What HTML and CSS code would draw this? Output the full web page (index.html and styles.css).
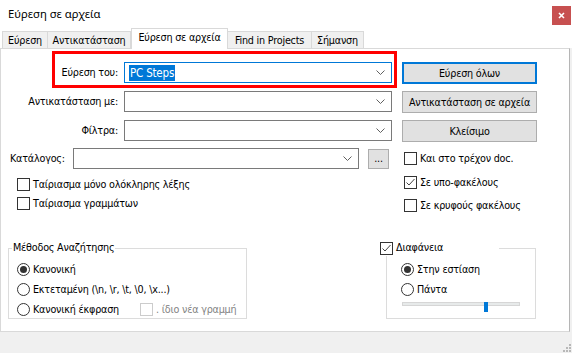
FILE: index.html
```html
<!DOCTYPE html>
<html lang="el">
<head>
    <meta charset="UTF-8">
    <meta name="viewport" content="width=device-width, initial-scale=1.0">
    <title>Εύρεση σε αρχεία</title>
    <link rel="stylesheet" href="styles.css">
</head>
<body>
    <div class="window">
        <div class="titlebar">
            <span class="title">Εύρεση σε αρχεία</span>
            <span class="close">
                <svg width="7" height="7" viewBox="0 0 7 7"><path d="M1 1 L6 6 M6 1 L1 6" stroke="#fff" stroke-width="1.6"/></svg>
            </span>
        </div>

        <div class="tabbar">
            <div class="tab tab-1">Εύρεση</div>
            <div class="tab tab-2">Αντικατάσταση</div>
            <div class="tab tab-3 active">Εύρεση σε αρχεία</div>
            <div class="tab tab-4">Find in Projects</div>
            <div class="tab tab-5">Σήμανση</div>
        </div>

        <div class="body">
            <div class="panel">
                <div class="find-rows">
                    <div class="row">
                        <label class="row-label">Εύρεση του:</label>
                        <div class="combo focused">
                            <span class="combo-text"><span class="selected-text">PC Steps</span></span>
                            <svg class="chevron" width="9" height="5" viewBox="0 0 9 5"><polyline points="0.5,0.5 4.5,4.5 8.5,0.5" fill="none" stroke="#606060"/></svg>
                        </div>
                        <button class="btn default">Εύρεση όλων</button>
                    </div>
                    <div class="row">
                        <label class="row-label">Αντικατάσταση με:</label>
                        <div class="combo">
                            <span class="combo-text"></span>
                            <svg class="chevron" width="9" height="5" viewBox="0 0 9 5"><polyline points="0.5,0.5 4.5,4.5 8.5,0.5" fill="none" stroke="#606060"/></svg>
                        </div>
                        <button class="btn">Αντικατάσταση σε αρχεία</button>
                    </div>
                    <div class="row">
                        <label class="row-label">Φίλτρα:</label>
                        <div class="combo">
                            <span class="combo-text"></span>
                            <svg class="chevron" width="9" height="5" viewBox="0 0 9 5"><polyline points="0.5,0.5 4.5,4.5 8.5,0.5" fill="none" stroke="#606060"/></svg>
                        </div>
                        <button class="btn">Κλείσιμο</button>
                    </div>
                </div>

                <div class="dir-row">
                    <label class="dir-label">Κατάλογος:</label>
                    <div class="combo dir-combo">
                        <span class="combo-text"></span>
                        <svg class="chevron" width="9" height="5" viewBox="0 0 9 5"><polyline points="0.5,0.5 4.5,4.5 8.5,0.5" fill="none" stroke="#606060"/></svg>
                    </div>
                    <button class="btn browse">...</button>
                    <div class="option dir-option"><span class="check"></span>Και στο τρέχον doc.</div>
                </div>

                <div class="options">
                    <div class="options-left">
                        <div class="option"><span class="check"></span>Ταίριασμα μόνο ολόκληρης λέξης</div>
                        <div class="option"><span class="check"></span>Ταίριασμα γραμμάτων</div>
                    </div>
                    <div class="options-right">
                        <div class="option"><span class="check checked"><svg width="11" height="11" viewBox="0 0 11 11"><polyline points="1.5,5.5 4,8 9.5,2" fill="none" stroke="#444" stroke-width="1"/></svg></span>Σε υπο-φακέλους</div>
                        <div class="option"><span class="check"></span>Σε κρυφούς φακέλους</div>
                    </div>
                </div>

                <div class="groups">
                    <div class="group group-search">
                        <span class="group-title">Μέθοδος Αναζήτησης</span>
                        <div class="radio-list">
                            <div class="option"><span class="radio on"></span>Κανονική</div>
                            <div class="option"><span class="radio"></span>Εκτεταμένη (\n, \r, \t, \0, \x...)</div>
                            <div class="option">
                                <span class="radio"></span>Κανονική έκφραση
                                <span class="disabled-option"><span class="check disabled"></span>. ίδιο νέα γραμμή</span>
                            </div>
                        </div>
                    </div>

                    <div class="group group-trans">
                        <span class="group-title trans-title"><span class="check checked"><svg width="11" height="11" viewBox="0 0 11 11"><polyline points="1.5,5.5 4,8 9.5,2" fill="none" stroke="#444" stroke-width="1"/></svg></span>Διαφάνεια</span>
                        <div class="radio-list">
                            <div class="option"><span class="radio on"></span>Στην εστίαση</div>
                            <div class="option"><span class="radio"></span>Πάντα</div>
                        </div>
                        <div class="slider">
                            <div class="track"></div>
                            <div class="thumb"></div>
                        </div>
                    </div>
                </div>

                <!-- annotation around the search field -->
                <div class="highlight-box"></div>
            </div>
            <div class="side"></div>
        </div>

        <div class="footer">
            <svg class="grip" width="9" height="9" viewBox="0 0 9 9">
                <rect x="7" y="1" width="2" height="2" fill="#b8b8b8"/>
                <rect x="4" y="4" width="2" height="2" fill="#b8b8b8"/>
                <rect x="7" y="4" width="2" height="2" fill="#b8b8b8"/>
                <rect x="1" y="7" width="2" height="2" fill="#b8b8b8"/>
                <rect x="4" y="7" width="2" height="2" fill="#b8b8b8"/>
                <rect x="7" y="7" width="2" height="2" fill="#b8b8b8"/>
            </svg>
        </div>
    </div>
</body>
</html>
```

FILE: styles.css
```css
body {
    margin: 0;
    padding: 0;
    font-family: "DejaVu Sans Condensed", "DejaVu Sans", sans-serif;
    font-size: 10.7px;
    letter-spacing: -0.2px;
    color: #000;
    background-color: #f0f0f0;
}
.window {
    width: 572px;
    height: 353px;
    overflow: hidden;
}

/* title bar */
.titlebar {
    height: 28px;
    background-color: #fff;
    display: flex;
    align-items: flex-start;
    justify-content: space-between;
}
.title {
    margin: 6px 0 0 8px;
    font-family: "Noto Sans", sans-serif;
    font-size: 11.3px;
    letter-spacing: 0;
}
.close {
    width: 19px;
    height: 19px;
    margin-top: 6px;
    margin-right: 1px;
    background-color: #c75050;
    display: flex;
    align-items: center;
    justify-content: center;
}

/* tabs */
.tabbar {
    height: 20px;
    background-color: #fff;
    display: flex;
    align-items: flex-end;
    padding-left: 2px;
}
.tab {
    height: 17px;
    box-sizing: border-box;
    background-color: #f0f0f0;
    border: 1px solid #d9d9d9;
    border-bottom: none;
    border-left: none;
    display: flex;
    align-items: center;
    justify-content: center;
    white-space: nowrap;
}
.tab-1 { width: 46px; border-left: 1px solid #d9d9d9; }
.tab-2 { width: 83px; }
.tab-3 { width: 97px; }
.tab-4 { width: 84px; }
.tab-5 { width: 52px; }
.tab.active {
    height: 21px;
    margin-bottom: -1px;
    background-color: #fff;
    border-left: 1px solid #d9d9d9;
    position: relative;
    z-index: 1;
    padding-bottom: 3px;
}

/* main panel */
.body {
    display: flex;
}
.panel {
    width: 570px;
    height: 284px;
    box-sizing: border-box;
    background-color: #fff;
    border: 1px solid #d9d9d9;
    border-right-color: #b5b5b5;
    position: relative;
}
.side {
    flex: 1;
}

.find-rows {
    margin-top: 13px;
    display: flex;
    flex-direction: column;
    gap: 7px;
}
.row {
    display: flex;
    align-items: flex-start;
    height: 22px;
}
.row-label {
    width: 117px;
    height: 21px;
    line-height: 21px;
    text-align: right;
}
.combo {
    width: 268px;
    height: 21px;
    box-sizing: border-box;
    margin-left: 6px;
    border: 1px solid #7a7a7a;
    background-color: #fff;
    display: flex;
    align-items: center;
}
.combo.focused {
    border-color: #0078d7;
}
.combo-text {
    flex: 1;
    padding-left: 4px;
}
.selected-text {
    font-size: 11.5px;
    background-color: #0078d7;
    color: #fff;
    padding: 1px 1px;
}
.chevron {
    margin-right: 6px;
}
.btn {
    font-family: inherit;
    font-size: inherit;
    letter-spacing: inherit;
    color: #000;
    width: 135px;
    height: 22px;
    margin-left: 10px;
    padding: 0;
    box-sizing: border-box;
    background-color: #e1e1e1;
    border: 1px solid #adadad;
    white-space: nowrap;
}
.btn.default {
    border: 2px solid #0078d7;
}

/* directory row */
.dir-row {
    margin-top: 6px;
    height: 21px;
    display: flex;
    align-items: center;
    padding-left: 9px;
}
.dir-label {
    width: 63px;
}
.combo.dir-combo {
    width: 286px;
    margin-left: 0;
}
.btn.browse {
    width: 21px;
    height: 20px;
    margin-left: 9px;
    line-height: 14px;
}
.dir-option {
    margin-left: 15px;
}

/* checkbox options */
.option {
    display: flex;
    align-items: center;
    height: 18px;
    white-space: nowrap;
}
.check {
    width: 13px;
    height: 13px;
    box-sizing: border-box;
    border: 1px solid #333;
    background-color: #fff;
    margin-right: 3px;
    display: flex;
    align-items: center;
    justify-content: center;
    flex-shrink: 0;
}
.check.disabled {
    border-color: #cccccc;
}
.radio {
    width: 13px;
    height: 13px;
    box-sizing: border-box;
    border: 1px solid #333;
    border-radius: 50%;
    background-color: #fff;
    margin-right: 3px;
    display: flex;
    align-items: center;
    justify-content: center;
    flex-shrink: 0;
}
.radio.on::after {
    content: "";
    width: 7px;
    height: 7px;
    border-radius: 50%;
    background-color: #333;
}
.options {
    display: flex;
}
.options-left {
    width: 387px;
    padding-left: 16px;
    margin-top: 6px;
    display: flex;
    flex-direction: column;
    gap: 1px;
}
.options-right {
    margin-top: 4px;
    display: flex;
    flex-direction: column;
    gap: 5px;
}

/* group boxes */
.groups {
    margin-top: 34px;
    display: flex;
}
.group {
    height: 71px;
    box-sizing: border-box;
    border: 1px solid #dcdcdc;
    position: relative;
    padding-top: 11px;
}
.group-search {
    width: 239px;
    margin-left: 7px;
    padding-left: 8px;
}
.group-trans {
    width: 150px;
    margin-left: 139px;
    padding-left: 14px;
}
.group-title {
    position: absolute;
    top: -9px;
    left: 3px;
    height: 16px;
    line-height: 16px;
    background-color: #fff;
    padding: 0 1px;
}
.trans-title {
    left: -7px;
    width: 119px;
    padding: 0;
    display: flex;
    align-items: center;
}
.radio-list {
    display: flex;
    flex-direction: column;
    gap: 2px;
}
.disabled-option {
    display: flex;
    align-items: center;
    margin-left: 21px;
    color: #838383;
}
.slider {
    position: relative;
    width: 118px;
    height: 10px;
    margin: 4px 0 0 1px;
}
.track {
    margin-top: 3px;
    height: 4px;
    box-sizing: border-box;
    background-color: #e7eaea;
    border: 1px solid #d6d6d6;
}
.thumb {
    position: absolute;
    left: 82px;
    top: 0;
    width: 4px;
    height: 10px;
    background-color: #0078d7;
}

.highlight-box {
    position: absolute;
    left: 51px;
    top: 2px;
    width: 345px;
    height: 37px;
    box-sizing: border-box;
    border: 3px solid #ff0000;
}

/* bottom strip */
.footer {
    height: 21px;
    display: flex;
    justify-content: flex-end;
    align-items: flex-end;
    padding-right: 1px;
}
.grip {
    margin-bottom: 1px;
}
```
